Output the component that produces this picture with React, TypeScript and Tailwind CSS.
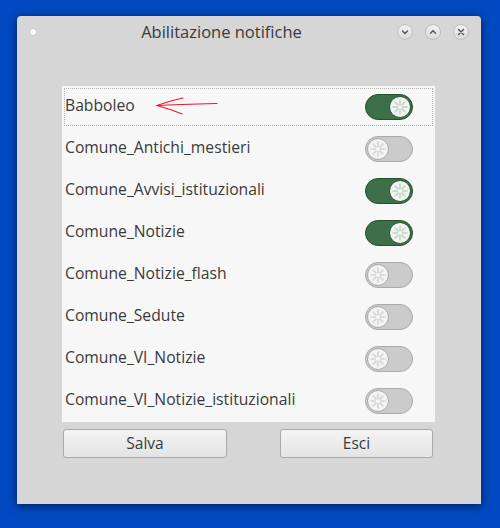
import React, { useState } from 'react';

const topics = [
  { name: 'Babboleo', on: true },
  { name: 'Comune_Antichi_mestieri', on: false },
  { name: 'Comune_Avvisi_istituzionali', on: true },
  { name: 'Comune_Notizie', on: true },
  { name: 'Comune_Notizie_flash', on: false },
  { name: 'Comune_Sedute', on: false },
  { name: 'Comune_VI_Notizie', on: false },
  { name: 'Comune_VI_Notizie_istituzionali', on: false },
];

function Knob({ on }: { on: boolean }) {
  const c = on ? '#b9d6bd' : '#d2d2d2';
  return (
    <svg width="22" height="22" viewBox="0 0 22 22">
      <circle cx="11" cy="11" r="10.5" fill="#f4f4f4" stroke={on ? '#2a5733' : '#a8a8a8'} strokeWidth="1" />
      {[0, 45, 90, 135].map((a) => (
        <line
          key={a}
          x1="11"
          y1="4"
          x2="11"
          y2="18"
          stroke={c}
          strokeWidth="1.6"
          strokeLinecap="round"
          transform={`rotate(${a} 11 11)`}
        />
      ))}
      <circle cx="11" cy="11" r="2" fill="#fafafa" />
    </svg>
  );
}

function Toggle({ on, onClick }: { on: boolean; onClick: () => void }) {
  return (
    <button
      onClick={onClick}
      className={`flex h-[26px] w-[48px] items-center rounded-full border-[1.5px] px-[1px] ${
        on ? 'justify-end border-[#24502d] bg-[#3d7048]' : 'justify-start border-[#aaaaaa] bg-[#cbcbcb]'
      }`}
    >
      <Knob on={on} />
    </button>
  );
}

function TitleButton({ kind }: { kind: 'min' | 'max' | 'close' }) {
  return (
    <div className="flex h-[16px] w-[16px] items-center justify-center rounded-full border border-[#bdbdbd] bg-gradient-to-b from-[#f2f2f2] to-[#dadada]">
      <svg width="8" height="8" viewBox="0 0 8 8" fill="none" stroke="#555" strokeWidth="1.4" strokeLinecap="round">
        {kind === 'min' && <path d="M1.5 3 L4 5.5 L6.5 3" />}
        {kind === 'max' && <path d="M1.5 5.3 L4 2.8 L6.5 5.3" />}
        {kind === 'close' && <path d="M1.5 1.5 L6.5 6.5 M6.5 1.5 L1.5 6.5" />}
      </svg>
    </div>
  );
}

export default function App() {
  const [items, setItems] = useState(topics);

  const toggle = (i: number) =>
    setItems((prev) => prev.map((t, j) => (j === i ? { ...t, on: !t.on } : t)));

  return (
    <div
      className="h-[528px] w-[500px] overflow-hidden bg-[#0049c0] pl-[17px] pt-[16px]"
      style={{ fontFamily: '"Open Sans", "Noto Sans", sans-serif' }}
    >
      <div className="flex h-[488px] w-[464px] flex-col rounded-t-[4px] bg-[#d6d6d6] shadow-[0_2px_10px_rgba(0,0,30,0.6)]">
        {/* title bar */}
        <div className="flex h-[31px] items-center pl-[13px] pr-[12px] pt-[1px]">
          <div className="h-[6px] w-[6px] rounded-full bg-white shadow-[0_0_1px_rgba(0,0,0,0.3)]" />
          <div className="flex-1 pl-[10px] text-center text-[16.5px] text-[#3a3a3a]">Abilitazione notifiche</div>
          <div className="flex gap-[12px]">
            <TitleButton kind="min" />
            <TitleButton kind="max" />
            <TitleButton kind="close" />
          </div>
        </div>

        {/* list */}
        <div className="ml-[45px] mt-[39px] w-[373px] bg-[#f7f7f7]">
          {items.map((t, i) => (
            <div key={t.name} className="relative flex h-[42px] items-center">
              {i === 0 && (
                <div className="absolute inset-[2px] border border-dotted border-[#b5b5b5]" />
              )}
              <span className="flex-1 pb-[2px] pl-[3px] text-[15.7px] text-[#3a3a3a]">{t.name}</span>
              <div className="pr-[22px]">
                <Toggle on={t.on} onClick={() => toggle(i)} />
              </div>
              {i === 0 && (
                <svg
                  className="absolute left-[93px] top-[8px]"
                  width="66"
                  height="24"
                  viewBox="0 0 66 24"
                  fill="none"
                  stroke="#e8182c"
                  strokeWidth="1.1"
                  strokeLinecap="round"
                >
                  <path d="M2 11.5 C 22 10.5, 42 10, 62 9.5" />
                  <path d="M2 11.5 C 12 8, 20 5.5, 28 4" />
                  <path d="M2 11.5 C 12 14, 19 17, 27 20" />
                </svg>
              )}
            </div>
          ))}
        </div>

        {/* buttons */}
        <div className="mt-[7px] flex">
          <button className="ml-[46px] h-[29px] w-[164px] rounded-[3px] border border-[#a9a9a9] bg-gradient-to-b from-[#f4f4f4] to-[#e4e4e4] text-[15.5px] text-[#3a3a3a]">
            Salva
          </button>
          <button className="ml-[53px] h-[29px] w-[153px] rounded-[3px] border border-[#a9a9a9] bg-gradient-to-b from-[#f4f4f4] to-[#e4e4e4] text-[15.5px] text-[#3a3a3a]">
            Esci
          </button>
        </div>
      </div>
    </div>
  );
}
